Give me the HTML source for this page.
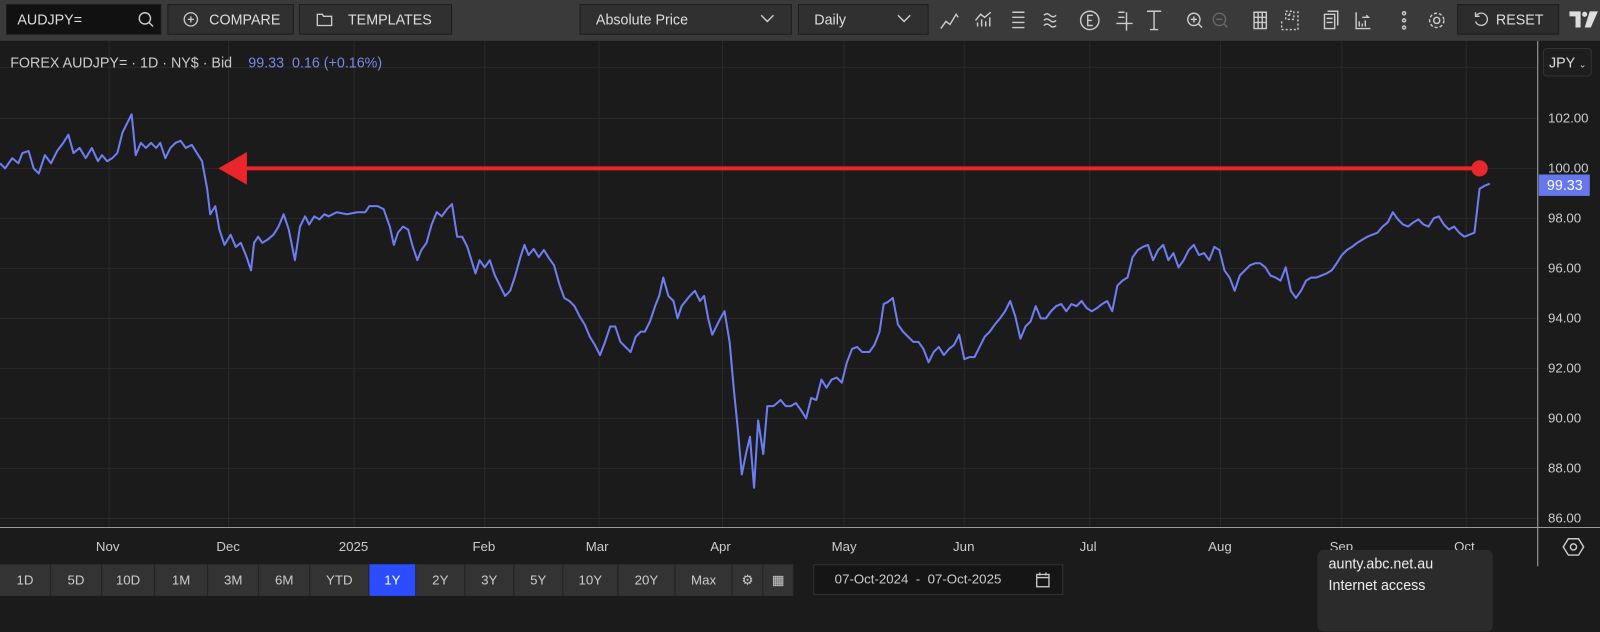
<!DOCTYPE html>
<html><head><meta charset="utf-8"><style>
*{margin:0;padding:0;box-sizing:border-box}
body{width:1600px;height:615px;background:#1b1b1b;font-family:"Liberation Sans",sans-serif;color:#ddd;overflow:hidden}
#w{position:absolute;left:0;top:0;width:1568px;height:603px;transform:scale(1.0204);transform-origin:0 0}
.tb{position:absolute;left:0;top:0;width:1568px;height:40px;background:#3a3a3a}
.b{position:absolute;top:4px;height:30px;background:#303030;border:1px solid #1e1e1e;color:#ddd;font-size:14px;line-height:28px}
.t{position:absolute;font-size:13px;color:#ccc}
.rb{position:absolute;top:553px;height:31px;background:#333;color:#ccc;font-size:13px;line-height:31px;text-align:center;border-right:1px solid #222}
</style></head><body><div id="w">
<div class="tb">
 <div class="b" style="left:6px;width:152px;background:#111;padding-left:10px">AUDJPY=
  <svg style="position:absolute;right:6px;top:6px" width="16" height="16"><circle cx="7" cy="7" r="5.5" fill="none" stroke="#ccc" stroke-width="1.4"/><line x1="11" y1="11" x2="15" y2="15" stroke="#ccc" stroke-width="1.4"/></svg></div>
 <div class="b" style="left:164px;width:124px;padding-left:40px">COMPARE
  <svg style="position:absolute;left:14px;top:6px" width="16" height="16"><circle cx="8" cy="8" r="6.5" fill="none" stroke="#ccc" stroke-width="1.3"/><path d="M8 5v6M5 8h6" stroke="#ccc" stroke-width="1.3"/></svg></div>
 <div class="b" style="left:293px;width:150px;padding-left:47px">TEMPLATES
  <svg style="position:absolute;left:16px;top:7px" width="16" height="14"><path d="M1 2h5l1 2h8v9H1z" fill="none" stroke="#ccc" stroke-width="1.3"/></svg></div>
 <div class="b" style="left:568px;width:208px;padding-left:15px">Absolute Price
  <svg style="position:absolute;right:16px;top:9px" width="14" height="9"><path d="M1 1l6 6 6-6" fill="none" stroke="#ccc" stroke-width="1.4"/></svg></div>
 <div class="b" style="left:782px;width:128px;padding-left:15px">Daily
  <svg style="position:absolute;right:16px;top:9px" width="14" height="9"><path d="M1 1l6 6 6-6" fill="none" stroke="#ccc" stroke-width="1.4"/></svg></div>
 <svg style="position:absolute;left:918px;top:8px" width="520" height="24" fill="none" stroke="#ccc" stroke-width="1.4">
  <path d="M4 20l5-7 4 3 6-10 2 3"/>
  <path d="M40 18v-4M44 18v-7M48 18v-5M52 18v-9M38 12l5-6 4 3 6-5"/>
  <path d="M74 4h12M74 9h12M74 14h12M74 19h12"/>
  <path d="M105 7q3-3 6 0t6 0M105 12q3-3 6 0t6 0M105 17q3-3 6 0t6 0"/>
  <circle cx="150" cy="12" r="9"/><path d="M153 7h-5v10h5M148 12h4"/>
  <path d="M178 4h6M178 9h6M186 4v18M176 15h16"/>
  <path d="M206 3h14M213 3v18M209 21h8"/>
  <circle cx="252" cy="11" r="6"/><path d="M256 15l4 4M249 11h6M252 8v6"/>
  <g stroke="#666"><circle cx="277" cy="11" r="6"/><path d="M281 15l4 4M274 11h6"/></g>
  <path d="M311 4h12v16h-12zM311 9h12M311 14h12M315 4v16M319 4v16"/>
  <path d="M342 3h8v8h-8zM346 5v4M344 7h4M354 3v18h-16v-8" stroke-dasharray="2 2"/>
  <path d="M380 6h10v14h-10zM383 3h10v14M382 10h6M382 14h6"/>
  <path d="M411 4v16h14M414 18v-5M417 18v-3M420 18v-6M417 9h6l-2-2"/>
  <circle cx="458" cy="5" r="1.5"/><circle cx="458" cy="12" r="1.5"/><circle cx="458" cy="19" r="1.5"/>
  <circle cx="490" cy="12" r="3"/><circle cx="490" cy="12" r="7" stroke-dasharray="3 2"/>
 </svg>
 <div class="b" style="left:1428px;width:100px;background:#2c2c2c;padding-left:37px">RESET
  <svg style="position:absolute;left:14px;top:6px" width="16" height="16"><path d="M4 4a6 6 0 1 1-1 6M3 1v4h4" fill="none" stroke="#ccc" stroke-width="1.3"/></svg></div>
 <svg style="position:absolute;left:1538px;top:11px" width="30" height="16" fill="#ddd"><path d="M0 0h11v16h-5V5H0z"/><circle cx="15" cy="3" r="2.5"/><path d="M20 0h8l-7 16h-6z"/></svg>
</div>

<svg style="position:absolute;left:0;top:40px" width="1568" height="515">
 <g stroke="#2a2a2a" stroke-width="1">
  <path d="M107 0v477M224 0v477M347 0v477M475 0v477M587 0v477M708 0v477M827 0v477M945 0v477M1068 0v477M1196 0v477M1315 0v477M1437 0v477"/>
  <path d="M0 76h1507M0 125h1507M0 174h1507M0 223h1507M0 272h1507M0 321h1507M0 370h1507M0 419h1507M0 468h1507M0 26h1507"/>
 </g>
 <path d="M1507 0v515" stroke="#aaa"/>
 <path d="M0 477h1568" stroke="#999"/>
</svg>
<svg style="position:absolute;left:0;top:0" width="1507" height="517">
<polyline fill="none" stroke="#6e7ef2" stroke-width="2" stroke-linejoin="round" points="0,160 5,165 12,155 18,160 22,150 28,148 33,165 38,170 44,152 50,160 56,148 62,140 67,132 72,150 78,145 84,155 90,145 96,158 100,152 105,158 110,155 115,150 120,130 125,120 129,112 133,152 138,140 143,145 148,140 153,145 157,140 162,155 167,145 172,140 177,138 182,145 188,142 193,150 198,158 203,185 206,210 211,202 215,225 220,240 226,230 231,242 236,238 241,250 246,265 249,238 253,232 257,238 262,235 268,230 273,222 278,210 283,225 289,255 294,222 299,212 303,220 308,212 313,215 318,210 322,212 330,208 340,210 350,208 358,208 362,202 370,202 376,205 382,222 386,240 390,228 395,222 400,225 404,240 409,255 413,245 418,238 423,220 428,208 433,212 438,205 443,200 448,232 453,232 458,242 462,255 466,268 470,255 475,262 480,255 485,270 490,280 495,290 500,285 505,270 510,252 514,240 518,250 523,244 528,252 533,245 538,253 543,260 548,278 553,292 558,295 563,300 568,310 573,318 578,330 583,338 588,348 593,335 598,320 603,320 608,335 613,340 618,345 623,330 628,325 632,325 637,315 642,300 646,290 650,272 655,290 660,295 664,312 668,300 672,295 676,290 681,285 686,295 690,290 694,312 698,328 702,320 706,312 710,305 715,335 719,380 723,420 727,465 731,445 735,428 739,478 743,412 748,445 752,398 758,398 765,392 770,398 775,398 780,395 785,402 790,410 795,390 800,392 805,372 810,380 815,372 820,370 825,375 830,355 835,342 840,340 845,345 852,345 857,338 862,325 866,298 870,296 875,292 880,318 885,325 890,330 895,335 900,335 905,342 910,355 915,345 920,340 925,348 930,342 935,338 940,328 945,352 950,350 955,350 960,340 965,330 970,325 975,318 980,312 985,305 990,295 995,310 1000,332 1005,320 1010,315 1015,300 1020,312 1025,312 1030,305 1035,300 1040,298 1045,305 1050,298 1055,300 1060,295 1065,302 1070,305 1075,302 1080,298 1085,295 1090,305 1095,280 1100,275 1105,272 1110,252 1115,245 1120,242 1125,240 1130,255 1135,245 1140,240 1145,255 1150,248 1155,262 1160,255 1165,245 1170,240 1175,250 1180,248 1185,255 1190,242 1195,245 1200,265 1205,272 1210,285 1215,270 1220,265 1225,260 1230,258 1235,258 1240,262 1245,270 1250,272 1255,275 1260,262 1265,285 1270,292 1275,285 1280,275 1285,272 1290,272 1295,270 1300,268 1305,265 1310,258 1315,250 1320,245 1325,242 1330,238 1335,235 1340,232 1345,230 1350,228 1355,222 1360,218 1365,208 1370,215 1375,220 1380,222 1385,218 1390,215 1395,220 1400,222 1405,214 1410,212 1415,220 1420,225 1425,222 1430,228 1435,232 1440,230 1445,228 1450,185 1455,182 1460,180"/>
<line x1="228" y1="165" x2="1450" y2="165" stroke="#e8262b" stroke-width="4"/>
<polygon points="214,165 242,149 242,181" fill="#e8262b"/>
<circle cx="1450" cy="165" r="8" fill="#e8262b"/>
</svg>

<div class="t" style="left:10px;top:53px;font-size:14px;color:#ccc">FOREX AUDJPY= · 1D · NY$ · Bid <span style="color:#7a86e8;margin-left:12px">99.33&nbsp; 0.16 (+0.16%)</span></div>
<div style="position:absolute;left:1512px;top:47px;width:48px;height:28px;border:1px solid #333;border-radius:4px;background:#1e1e1e;font-size:14px;line-height:26px;padding-left:5px;color:#ddd">JPY <span style="font-size:9px">⌄</span></div>
<div class="t" style="left:1517px;top:108px">102.00</div>
<div class="t" style="left:1517px;top:157px">100.00</div>
<div style="position:absolute;left:1508px;top:171px;width:50px;height:21px;background:#6677ee;color:#fff;font-size:14px;line-height:21px;padding-left:8px">99.33</div>
<div class="t" style="left:1517px;top:206px">98.00</div>
<div class="t" style="left:1517px;top:255px">96.00</div>
<div class="t" style="left:1517px;top:304px">94.00</div>
<div class="t" style="left:1517px;top:353px">92.00</div>
<div class="t" style="left:1517px;top:402px">90.00</div>
<div class="t" style="left:1517px;top:451px">88.00</div>
<div class="t" style="left:1517px;top:500px">86.00</div>
<svg style="position:absolute;left:1531px;top:525px" width="22" height="22" fill="none" stroke="#ccc" stroke-width="1.4"><path d="M6 3h10l5 8-5 8H6l-5-8z"/><circle cx="11" cy="11" r="3"/></svg>

<div class="t" style="left:94px;top:528px">Nov</div>
<div class="t" style="left:212px;top:528px">Dec</div>
<div class="t" style="left:332px;top:528px">2025</div>
<div class="t" style="left:463px;top:528px">Feb</div>
<div class="t" style="left:574px;top:528px">Mar</div>
<div class="t" style="left:696px;top:528px">Apr</div>
<div class="t" style="left:815px;top:528px">May</div>
<div class="t" style="left:934px;top:528px">Jun</div>
<div class="t" style="left:1058px;top:528px">Jul</div>
<div class="t" style="left:1184px;top:528px">Aug</div>
<div class="t" style="left:1303px;top:528px">Sep</div>
<div class="t" style="left:1425px;top:528px">Oct</div>

<div class="rb" style="left:0;width:50px">1D</div>
<div class="rb" style="left:50px;width:50px">5D</div>
<div class="rb" style="left:100px;width:52px">10D</div>
<div class="rb" style="left:152px;width:52px">1M</div>
<div class="rb" style="left:204px;width:50px">3M</div>
<div class="rb" style="left:254px;width:50px">6M</div>
<div class="rb" style="left:304px;width:58px">YTD</div>
<div class="rb" style="left:362px;width:46px;background:#2b4dff;color:#fff">1Y</div>
<div class="rb" style="left:408px;width:48px">2Y</div>
<div class="rb" style="left:456px;width:48px">3Y</div>
<div class="rb" style="left:504px;width:48px">5Y</div>
<div class="rb" style="left:552px;width:54px">10Y</div>
<div class="rb" style="left:606px;width:56px">20Y</div>
<div class="rb" style="left:662px;width:56px">Max</div>
<div class="rb" style="left:718px;width:30px">⚙</div>
<div class="rb" style="left:748px;width:30px">▦</div>
<div style="position:absolute;left:797px;top:553px;width:245px;height:30px;background:#151515;border:1px solid #333;font-size:13px;line-height:28px;color:#ccc;padding-left:20px">07-Oct-2024 &nbsp;-&nbsp; 07-Oct-2025
 <svg style="position:absolute;right:12px;top:6px" width="14" height="16" fill="none" stroke="#ccc" stroke-width="1.3"><rect x="1" y="3" width="12" height="12"/><path d="M1 6h12M4 1v3M10 1v3"/></svg></div>

<div style="position:absolute;left:1291px;top:539px;width:172px;height:80px;background:#2b2b2b;border-radius:6px;color:#eee;font-size:14px;line-height:21px;padding:3px 0 0 11px">aunty.abc.net.au<br>Internet access</div>
</div></body></html>
